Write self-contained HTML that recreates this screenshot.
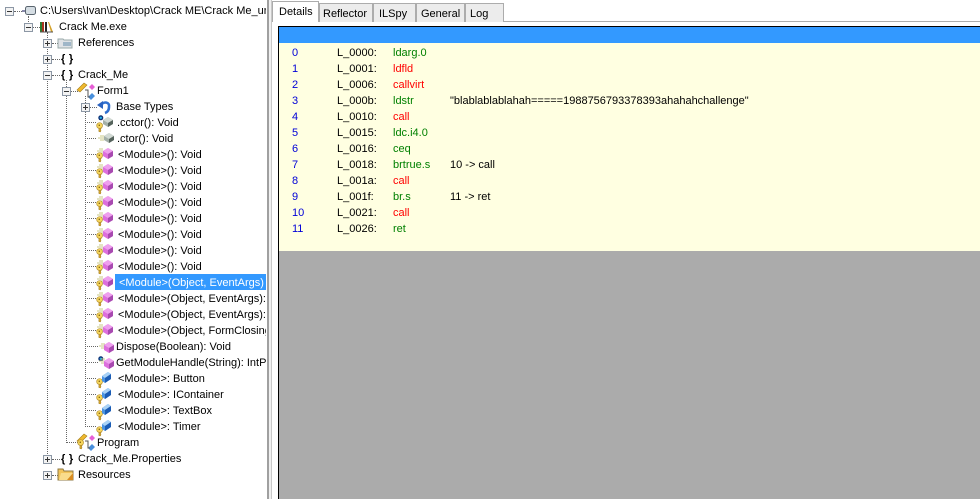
<!DOCTYPE html>
<html><head><meta charset="utf-8"><style>
html,body{margin:0;padding:0;width:980px;height:499px;overflow:hidden;background:#fff}
body{position:relative;font-family:"Liberation Sans",sans-serif;font-size:11px;color:#000}
.a{position:absolute}
#tree{position:absolute;left:0;top:0;width:266px;height:499px;overflow:hidden;background:#fff}
#tree span,#right span{position:absolute;white-space:nowrap;line-height:16px;height:16px;margin-top:1px}
.v,.h{position:absolute}
.v{width:0;border-left:1px dotted #666}
.h{height:0;border-top:1px dotted #666}
.b{position:absolute;width:7px;height:7px;border:1px solid #8c97a5;background:#f3f3f3}
.b:before{content:"";position:absolute;left:1px;top:3px;width:5px;height:1px;background:#333}
.p:after{content:"";position:absolute;left:3px;top:1px;width:1px;height:5px;background:#333}
svg.i{position:absolute;overflow:visible}
.t{position:absolute;box-sizing:border-box;height:19px;top:3px;background:#ececec;border:1px solid #acacac;border-bottom:0;line-height:20px;padding-left:3px;white-space:nowrap}
.n{color:#0000d8}.g{color:#008000}.r{color:#f00}
.br{font-weight:bold;font-size:11px;letter-spacing:.3px}
</style></head><body>
<svg width="0" height="0" style="position:absolute"><defs>
<g id="key"><path d="M3 6.5l-.2 3 1.6.5.6-1.5-.5-1 .8-1z" fill="#d9a92e" stroke="#9c7a20" stroke-width=".5"/><circle cx="3.6" cy="3.6" r="2.9" fill="#f6d65c" stroke="#b89230" stroke-width=".7"/><rect x="2.6" y="2.6" width="1.4" height="1.4" fill="#8a6c18"/></g>
<g id="dash"><path d="M3 2h4M1 4h6M3 6h4" stroke="#c9c98a" stroke-width="1" fill="none"/></g>
<g id="pur"><path d="M6 0l5 3v5l-5 3-5-3V3z" fill="#dd6fdd"/><path d="M6 0l5 3-5 3-5-3z" fill="#eea0ee"/><path d="M6 6l5-3v5l-5 3z" fill="#a84ab0"/></g>
<g id="gry"><path d="M6 0l5 3v4l-5 3-5-3V3z" fill="#a4b0a8"/><path d="M6 0l5 3-5 3-5-3z" fill="#d2dad4"/><path d="M6 6l5-3v4l-5 3z" fill="#55635c"/></g>
<g id="blu"><path d="M7 0l3 2v5l-6 4-3-2V4z" fill="#4b94e2"/><path d="M7 0l3 2-6 4-3-2z" fill="#a9d2f6"/><path d="M4 6l6-4v5l-6 4z" fill="#1b5cb4"/></g>
<g id="dot"><circle cx="2.8" cy="2.8" r="2.5" fill="#0d2f74"/><circle cx="2.8" cy="2.8" r="1.2" fill="#22b4e8"/></g>
<g id="cls"><path d="M0 7l7-7 3 2-7 7z" fill="#efb92e" stroke="#a77f18" stroke-width=".6"/><path d="M12 4l3-3 3 3-3 3z" fill="#e65fd5"/><path d="M11 14l4-4 3 3-4 4z" fill="#4a90dc"/><path d="M8 7h3v7h2" fill="none" stroke="#555"/></g>
</defs></svg>

<div id="tree">
<!-- lines -->
<div class="v" style="left:28px;top:16px;height:8px"></div>
<div class="v" style="left:47px;top:32px;height:426px"></div>
<div class="v" style="left:66px;top:80px;height:363px"></div>
<div class="v" style="left:85px;top:96px;height:331px"></div>
<div class="h" style="left:14px;top:11px;width:8px"></div>
<div class="h" style="left:33px;top:27px;width:7px"></div>
<div class="h" style="left:52px;top:43px;width:6px"></div>
<div class="h" style="left:52px;top:59px;width:8px"></div>
<div class="h" style="left:52px;top:75px;width:8px"></div>
<div class="h" style="left:71px;top:91px;width:7px"></div>
<div class="h" style="left:90px;top:107px;width:7px"></div>
<div class="h" style="left:66px;top:442px;width:12px"></div>
<div class="h" style="left:52px;top:459px;width:8px"></div>
<div class="h" style="left:52px;top:475px;width:6px"></div>
<div class="h" style="left:85px;top:122px;width:11px"></div><div class="h" style="left:85px;top:138px;width:11px"></div><div class="h" style="left:85px;top:154px;width:11px"></div><div class="h" style="left:85px;top:170px;width:11px"></div><div class="h" style="left:85px;top:186px;width:11px"></div><div class="h" style="left:85px;top:202px;width:11px"></div><div class="h" style="left:85px;top:218px;width:11px"></div><div class="h" style="left:85px;top:234px;width:11px"></div><div class="h" style="left:85px;top:250px;width:11px"></div><div class="h" style="left:85px;top:266px;width:11px"></div><div class="h" style="left:85px;top:282px;width:11px"></div><div class="h" style="left:85px;top:298px;width:11px"></div><div class="h" style="left:85px;top:314px;width:11px"></div><div class="h" style="left:85px;top:330px;width:11px"></div><div class="h" style="left:85px;top:346px;width:13px"></div><div class="h" style="left:85px;top:362px;width:13px"></div><div class="h" style="left:85px;top:378px;width:11px"></div><div class="h" style="left:85px;top:394px;width:11px"></div><div class="h" style="left:85px;top:410px;width:11px"></div><div class="h" style="left:85px;top:426px;width:11px"></div>
<!-- expanders -->
<div class="b" style="left:5px;top:7px"></div>
<div class="b" style="left:24px;top:23px"></div>
<div class="b p" style="left:43px;top:39px"></div>
<div class="b p" style="left:43px;top:55px"></div>
<div class="b" style="left:43px;top:71px"></div>
<div class="b" style="left:62px;top:87px"></div>
<div class="b p" style="left:81px;top:103px"></div>
<div class="b p" style="left:43px;top:455px"></div>
<div class="b p" style="left:43px;top:471px"></div>
<!-- icons: top-level -->
<svg class="i" style="left:22px;top:5px" width="14" height="12"><rect x="3.5" y="1.5" width="10" height="8" rx="2" fill="#d5dde3" stroke="#59646e"/><rect x="0" y="5" width="3" height="2" fill="#88a"/></svg>
<svg class="i" style="left:40px;top:21px" width="16" height="13"><rect x="0" y="1" width="2" height="10" fill="#2d7a2d"/><rect x="2" y="1" width="2" height="10" fill="#a8321f"/><rect x="5" y="1" width="2" height="10" fill="#222"/><path d="M8 1l1 0 4 10-2 0z" fill="#d4a12a"/><path d="M0 11h13" stroke="#555"/></svg>
<svg class="i" style="left:58px;top:37px" width="16" height="12"><path d="M0 2h5l1 1h8v8H0z" fill="#dfe2e6" stroke="#9aa"/><rect x="5" y="5" width="8" height="4" fill="#9fb6c8"/></svg>
<svg class="i" style="left:58px;top:467px" width="16" height="14"><path d="M0 2h5l1 2h9v9H0z" fill="#f2c45a" stroke="#8f7a44"/><path d="M3 6h12v7H1z" fill="#f9dc8c"/><path d="M9 13l6-7v7z" fill="#d98c20"/></svg>
<span class="br" style="left:61px;top:50px">{ }</span>
<span class="br" style="left:61px;top:66px">{ }</span>
<span class="br" style="left:61px;top:450px">{ }</span>
<svg class="i" style="left:77px;top:83px" width="18" height="16"><use href="#cls"/></svg>
<svg class="i" style="left:77px;top:434px" width="18" height="16"><use href="#cls"/><use href="#key" x="0" y="5"/></svg>
<svg class="i" style="left:97px;top:100px" width="14" height="14"><path d="M4 5C7 1 13 2 12 7 12 10 11 12 8 13" fill="none" stroke="#2f6fd0" stroke-width="2.6"/><path d="M0 5l6-4v8z" fill="#2a62c0"/></svg>
<!-- member icons -->
<svg class="i" style="left:96px;top:115px" width="18" height="18"><use href="#key" y="7"/><use href="#dot" x="2"/><use href="#gry" x="6" y="2"/></svg>
<svg class="i" style="left:97px;top:131px" width="18" height="16"><use href="#dash" y="3"/><use href="#gry" x="6" y="2"/></svg>
<svg class="i" style="left:96px;top:147px" width="18" height="18"><use href="#dash" y="0"/><use href="#key" y="5"/><use href="#pur" x="6" y="1"/></svg>
<svg class="i" style="left:96px;top:163px" width="18" height="18"><use href="#dash" y="0"/><use href="#key" y="5"/><use href="#pur" x="6" y="1"/></svg>
<svg class="i" style="left:96px;top:179px" width="18" height="18"><use href="#dash" y="0"/><use href="#key" y="5"/><use href="#pur" x="6" y="1"/></svg>
<svg class="i" style="left:96px;top:195px" width="18" height="18"><use href="#dash" y="0"/><use href="#key" y="5"/><use href="#pur" x="6" y="1"/></svg>
<svg class="i" style="left:96px;top:211px" width="18" height="18"><use href="#dash" y="0"/><use href="#key" y="5"/><use href="#pur" x="6" y="1"/></svg>
<svg class="i" style="left:96px;top:227px" width="18" height="18"><use href="#dash" y="0"/><use href="#key" y="5"/><use href="#pur" x="6" y="1"/></svg>
<svg class="i" style="left:96px;top:243px" width="18" height="18"><use href="#dash" y="0"/><use href="#key" y="5"/><use href="#pur" x="6" y="1"/></svg>
<svg class="i" style="left:96px;top:259px" width="18" height="18"><use href="#dash" y="0"/><use href="#key" y="5"/><use href="#pur" x="6" y="1"/></svg>
<svg class="i" style="left:96px;top:275px" width="18" height="18"><use href="#dash" y="0"/><use href="#key" y="5"/><use href="#pur" x="6" y="1"/></svg>
<svg class="i" style="left:96px;top:291px" width="18" height="18"><use href="#dash" y="0"/><use href="#key" y="5"/><use href="#pur" x="6" y="1"/></svg>
<svg class="i" style="left:96px;top:307px" width="18" height="18"><use href="#dash" y="0"/><use href="#key" y="5"/><use href="#pur" x="6" y="1"/></svg>
<svg class="i" style="left:96px;top:323px" width="18" height="18"><use href="#dash" y="0"/><use href="#key" y="5"/><use href="#pur" x="6" y="1"/></svg>
<svg class="i" style="left:98px;top:340px" width="16" height="14"><use href="#dash" y="2"/><use href="#pur" x="5" y="2"/></svg>
<svg class="i" style="left:98px;top:355px" width="16" height="18"><use href="#dot" y="1"/><use href="#dash" y="2"/><use href="#pur" x="5" y="3"/></svg>
<svg class="i" style="left:96px;top:371px" width="18" height="18"><use href="#key" y="7"/><use href="#blu" x="5" y="1"/></svg>
<svg class="i" style="left:96px;top:387px" width="18" height="18"><use href="#key" y="7"/><use href="#blu" x="5" y="1"/></svg>
<svg class="i" style="left:96px;top:403px" width="18" height="18"><use href="#key" y="7"/><use href="#blu" x="5" y="1"/></svg>
<svg class="i" style="left:96px;top:419px" width="18" height="18"><use href="#key" y="7"/><use href="#blu" x="5" y="1"/></svg>
<!-- selection -->
<div class="a" style="left:115px;top:274px;width:151px;height:16px;background:#3399ff"></div>
<!-- text -->
<span style="left:40px;top:2px">C:\Users\Ivan\Desktop\Crack ME\Crack Me_un</span>
<span style="left:59px;top:18px">Crack Me.exe</span>
<span style="left:78px;top:34px">References</span>
<span style="left:78px;top:66px">Crack_Me</span>
<span style="left:97px;top:82px">Form1</span>
<span style="left:116px;top:98px">Base Types</span>
<span style="left:117px;top:114px">.cctor(): Void</span>
<span style="left:117px;top:130px">.ctor(): Void</span>
<span style="left:118px;top:146px">&lt;Module&gt;(): Void</span>
<span style="left:118px;top:162px">&lt;Module&gt;(): Void</span>
<span style="left:118px;top:178px">&lt;Module&gt;(): Void</span>
<span style="left:118px;top:194px">&lt;Module&gt;(): Void</span>
<span style="left:118px;top:210px">&lt;Module&gt;(): Void</span>
<span style="left:118px;top:226px">&lt;Module&gt;(): Void</span>
<span style="left:118px;top:242px">&lt;Module&gt;(): Void</span>
<span style="left:118px;top:258px">&lt;Module&gt;(): Void</span>
<span style="left:119px;top:274px;color:#fff">&lt;Module&gt;(Object, EventArgs)</span>
<span style="left:118px;top:290px">&lt;Module&gt;(Object, EventArgs):</span>
<span style="left:118px;top:306px">&lt;Module&gt;(Object, EventArgs):</span>
<span style="left:118px;top:322px">&lt;Module&gt;(Object, FormClosing</span>
<span style="left:116px;top:338px">Dispose(Boolean): Void</span>
<span style="left:116px;top:354px">GetModuleHandle(String): IntPtr</span>
<span style="left:118px;top:370px">&lt;Module&gt;: Button</span>
<span style="left:118px;top:386px">&lt;Module&gt;: IContainer</span>
<span style="left:118px;top:402px">&lt;Module&gt;: TextBox</span>
<span style="left:118px;top:418px">&lt;Module&gt;: Timer</span>
<span style="left:97px;top:434px">Program</span>
<span style="left:78px;top:450px">Crack_Me.Properties</span>
<span style="left:78px;top:466px">Resources</span>
</div>

<!-- splitter -->
<div class="a" style="left:267px;top:0;width:2px;height:499px;background:#a0a0a0"></div>
<div class="a" style="left:269px;top:0;width:2px;height:499px;background:#f0f0f0"></div>
<div class="a" style="left:271px;top:0;width:1px;height:499px;background:#c8c8c8"></div>

<!-- tabs -->
<div class="a" style="left:272px;top:21px;width:708px;height:1px;background:#acacac"></div>
<div class="t" style="left:319px;width:54px">Reflector</div>
<div class="t" style="left:373px;width:43px;padding-left:5px">ILSpy</div>
<div class="t" style="left:416px;width:49px;padding-left:4px">General</div>
<div class="t" style="left:465px;width:39px;padding-left:4px">Log</div>
<div class="t" style="left:272px;top:1px;height:21px;width:47px;background:#fff;line-height:20px;padding-left:6px">Details</div>

<!-- content -->
<div class="a" style="left:278px;top:26px;width:702px;height:473px;background:#ababab;border-left:1px solid #000;border-top:1px solid #000;box-sizing:border-box"></div>
<div class="a" style="left:279px;top:27px;width:701px;height:16px;background:#3399ff"></div>
<div class="a" style="left:279px;top:43px;width:701px;height:208px;background:#ffffe1"></div>

<div id="right" class="a" style="left:0;top:0;width:980px;height:499px">
<span class="n" style="left:292px;top:44px">0</span><span style="left:337px;top:44px">L_0000:</span><span class="g" style="left:393px;top:44px">ldarg.0</span>
<span class="n" style="left:292px;top:60px">1</span><span style="left:337px;top:60px">L_0001:</span><span class="r" style="left:393px;top:60px">ldfld</span>
<span class="n" style="left:292px;top:76px">2</span><span style="left:337px;top:76px">L_0006:</span><span class="r" style="left:393px;top:76px">callvirt</span>
<span class="n" style="left:292px;top:92px">3</span><span style="left:337px;top:92px">L_000b:</span><span class="g" style="left:393px;top:92px">ldstr</span><span style="left:450px;top:92px">"blablablablahah=====1988756793378393ahahahchallenge"</span>
<span class="n" style="left:292px;top:108px">4</span><span style="left:337px;top:108px">L_0010:</span><span class="r" style="left:393px;top:108px">call</span>
<span class="n" style="left:292px;top:124px">5</span><span style="left:337px;top:124px">L_0015:</span><span class="g" style="left:393px;top:124px">ldc.i4.0</span>
<span class="n" style="left:292px;top:140px">6</span><span style="left:337px;top:140px">L_0016:</span><span class="g" style="left:393px;top:140px">ceq</span>
<span class="n" style="left:292px;top:156px">7</span><span style="left:337px;top:156px">L_0018:</span><span class="g" style="left:393px;top:156px">brtrue.s</span><span style="left:450px;top:156px">10 -&gt; call</span>
<span class="n" style="left:292px;top:172px">8</span><span style="left:337px;top:172px">L_001a:</span><span class="r" style="left:393px;top:172px">call</span>
<span class="n" style="left:292px;top:188px">9</span><span style="left:337px;top:188px">L_001f:</span><span class="g" style="left:393px;top:188px">br.s</span><span style="left:450px;top:188px">11 -&gt; ret</span>
<span class="n" style="left:292px;top:204px">10</span><span style="left:337px;top:204px">L_0021:</span><span class="r" style="left:393px;top:204px">call</span>
<span class="n" style="left:292px;top:220px">11</span><span style="left:337px;top:220px">L_0026:</span><span class="g" style="left:393px;top:220px">ret</span>
</div>
</body></html>
